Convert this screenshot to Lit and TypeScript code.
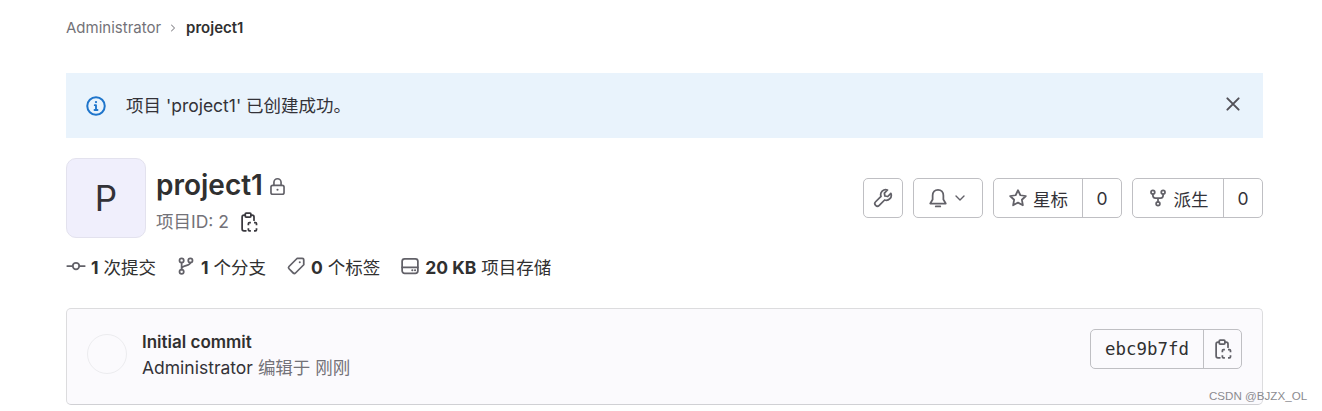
import { LitElement, html, css, svg } from "lit";
import { customElement } from "lit/decorators.js";

const ic = (body: unknown, size = 20, cls = "") => html`<svg class="ic ${cls}" width=${size} height=${size} viewBox="0 0 16 16" fill="none" stroke="currentColor" stroke-width="1.4" stroke-linecap="round" stroke-linejoin="round">${body}</svg>`;

const clipboard = svg`<path d="M5 2.5H4A1.5 1.5 0 0 0 2.5 4v9.5A1.5 1.5 0 0 0 4 15h1.5"/><path d="M9.5 2.5h1A1.5 1.5 0 0 1 12 4v2.5"/><rect x="5" y="0.9" width="4.5" height="3.1" rx=".7"/><path stroke-linecap="butt" d="M7.5 10.5V9.3a.8.8 0 0 1 .8-.8h1.2M12 8.5h1.2a.8.8 0 0 1 .8.8v1.2M14 13v1.2a.8.8 0 0 1-.8.8H12M9.5 15H8.3a.8.8 0 0 1-.8-.8V13"/>`;
const branch = svg`<circle cx="4.5" cy="3.5" r="1.7"/><circle cx="4.5" cy="12.5" r="1.7"/><circle cx="11.5" cy="3.5" r="1.7"/><path d="M4.5 5.2v5.6M11.5 5.2c0 3-7 2-7 5"/>`;
const fork = svg`<circle cx="3.9" cy="3.4" r="1.5"/><circle cx="12.1" cy="3.4" r="1.5"/><circle cx="8" cy="12.6" r="1.5"/><path d="M3.9 4.9v.9c0 1.4 1 2.2 2 2.2h4.2c1 0 2-.8 2-2.2v-.9M8 8v3.1"/>`;

@customElement("app-root")
export class AppRoot extends LitElement {
  static styles = css`
    :host { display: block; position: relative; height: 411px; overflow: hidden; background: #fff; color: #303030;
      font-family: Inter, "Noto Sans CJK SC", sans-serif; font-size: 17.5px; }
    * { box-sizing: border-box; }
    .ic { display: block; flex: none; }
    .page { padding: 0 59px 0 66px; display: flex; flex-direction: column; }
    .crumbs { height: 73px; padding-bottom: 18px; display: flex; align-items: center; font-size: 15px; color: #737278; }
    .crumbs .sep { margin: 0 7px 0 6px; color: #89888d; }
    .crumbs b { color: #303030; font-weight: 600; }
    .alert { height: 65px; background: #e9f3fc; display: flex; align-items: center; padding: 0 20px; color: #333238; }
    .alert .info { color: #1f75cb; margin-right: 20px; }
    .alert .msg { flex: 1; font-size: 17.5px; padding-bottom: 2px; }
    .alert .close { color: #535158; margin-top: -4px; }
    .head { margin-top: 20px; display: flex; align-items: flex-start; justify-content: space-between; }
    .left { display: flex; }
    .avatar { width: 80px; height: 80px; border-radius: 10px; background: #f0effc; border: 1px solid #e3e2ee; display: flex; align-items: center; justify-content: center; font-size: 35px; color: #333238; }
    .titles { margin-left: 10px; }
    .title { display: flex; align-items: center; font-size: 28px; font-weight: 600; line-height: 36px; margin-top: 9px; color: #303030; }
    .title .ic { margin: 3px 0 0 5px; color: #626168; }
    .pid { display: flex; align-items: center; font-size: 17.5px; line-height: 24px; color: #737278; margin-top: 7px; }
    .pid .ic { margin-left: 10px; color: #3a393f; }
    .actions { display: flex; gap: 10px; margin-top: 20px; }
    .btn { height: 40px; border: 1px solid #bfbfc3; border-radius: 5px; display: flex; align-items: stretch; background: #fff; color: #333238; }
    .cell { display: flex; align-items: center; justify-content: center; }
    .cell + .cell { border-left: 1px solid #bfbfc3; }
    .cell .ic { color: #626168; }
    .wrench { width: 38px; }
    .bell { width: 68px; gap: 4px; }
    .star { width: 129px; } .star .a { width: 88px; gap: 5px; } .star .n { flex: 1; }
    .forkb { width: 131px; } .forkb .a { width: 90px; gap: 6px; } .forkb .n { flex: 1; }
    .stats { display: flex; align-items: center; height: 24px; margin-top: 16px; gap: 20px; }
    .stat { display: flex; align-items: center; gap: 5px; font-size: 17.5px; color: #303030; }
    .stat .ic { color: #626168; }
    .stat b { font-weight: 700; }
    .card { margin-top: 30px; height: 97px; border: 1px solid #dcdcde; border-bottom-color: #d0d0d4; border-radius: 5px; background: #fbfafd; display: flex; align-items: flex-start; padding: 20px 20px 0; }
    .circle { width: 40px; height: 40px; border-radius: 50%; border: 1px solid #ececef; background: #fbfafd; margin: 5px 15px 0 0; flex: none; }
    .info2 { flex: 1; line-height: 26px; }
    .ctitle { font-weight: 600; font-size: 17px; color: #303030; }
    .csub { font-size: 17.5px; color: #333238; }
    .csub span { color: #737278; }
    .sha { height: 40px; background: #fbfafd; }
    .sha .a { width: 112px; font-family: "DejaVu Sans Mono", "Liberation Mono", monospace; font-size: 17.4px; color: #303030; }
    .sha .b { width: 38px; }
    .wm { position: absolute; left: 1209px; top: 388px; font-size: 11.6px; line-height: 15px; color: #8b8b90; font-family: "Liberation Sans", sans-serif; }
  `;

  render() {
    return html`<div class="page">
      <nav class="crumbs"><span>Administrator</span>
        <span class="sep">${ic(svg`<path d="M6 4l4 4-4 4"/>`, 12)}</span>
        <b>project1</b></nav>
      <div class="alert">
        <span class="info">${ic(svg`<circle cx="8" cy="8" r="7" stroke-width="1.6"/><path d="M8 7.5v3.5M6.8 11.2h2.4M7 7.3h1" stroke-width="1.5"/><circle cx="8" cy="4.8" r=".9" fill="currentColor" stroke="none"/>`)}</span>
        <span class="msg">项目 'project1' 已创建成功。</span>
        <span class="close">${ic(svg`<path d="M3.5 3.5l9 9M12.5 3.5l-9 9" stroke-width="1.6"/>`)}</span>
      </div>
      <div class="head">
        <div class="left">
          <div class="avatar">P</div>
          <div class="titles">
            <div class="title">project1${ic(svg`<rect x="2.5" y="7" width="11" height="7.5" rx="1.5"/><path d="M5 7V4.5a3 3 0 0 1 6 0V7"/><circle cx="8" cy="10.7" r=".9" fill="currentColor" stroke="none"/>`, 19)}</div>
            <div class="pid">项目ID: 2${ic(clipboard)}</div>
          </div>
        </div>
        <div class="actions">
          <div class="btn"><div class="cell wrench">${ic(svg`<path d="M14.3 4.3l-2.5 2.5-2.3-.4-.4-2.3 2.5-2.5a4 4 0 0 0-5.2 5.1L2.1 11a2.05 2.05 0 0 0 2.9 2.9l4.3-4.3a4 4 0 0 0 5-5.3z"/>`)}</div></div>
          <div class="btn"><div class="cell bell">${ic(svg`<path d="M8 1.4C5.4 1.4 3.7 3.4 3.7 6v3.2L1.8 12.4h12.4l-1.9-3.2V6c0-2.6-1.7-4.6-4.3-4.6z"/><path d="M6.2 14.7h3.6"/>`)}${ic(svg`<path d="M4 6l4 4 4-4"/>`, 16)}</div></div>
          <div class="btn star"><div class="cell a">${ic(svg`<path d="M8 1.8l1.9 4 4.4.6-3.2 3 .8 4.4L8 11.7l-3.9 2.1.8-4.4-3.2-3 4.4-.6z"/>`)}<span>星标</span></div><div class="cell n">0</div></div>
          <div class="btn forkb"><div class="cell a">${ic(fork)}<span>派生</span></div><div class="cell n">0</div></div>
        </div>
      </div>
      <div class="stats">
        <div class="stat">${ic(svg`<circle cx="8" cy="8" r="2.6"/><path d="M1 8h4.4M10.6 8H15"/>`)}<span><b>1</b> 次提交</span></div>
        <div class="stat">${ic(branch)}<span><b>1</b> 个分支</span></div>
        <div class="stat">${ic(svg`<path d="M9 1.8h4a1.2 1.2 0 0 1 1.2 1.2v4L7.6 13.6a1.3 1.3 0 0 1-1.8 0l-3.4-3.4a1.3 1.3 0 0 1 0-1.8z"/><circle cx="11" cy="5" r=".8" fill="currentColor" stroke="none"/>`)}<span><b>0</b> 个标签</span></div>
        <div class="stat">${ic(svg`<rect x="1.7" y="2.2" width="12.6" height="11.6" rx="2"/><path d="M1.7 9h12.6"/><path d="M9.8 11.4h.1M12 11.4h.1" stroke-width="1.6"/>`)}<span><b>20 KB</b> 项目存储</span></div>
      </div>
      <div class="card">
        <div class="circle"></div>
        <div class="info2">
          <div class="ctitle">Initial commit</div>
          <div class="csub">Administrator <span>编辑于 刚刚</span></div>
        </div>
        <div class="btn sha"><div class="cell a">ebc9b7fd</div><div class="cell b">${ic(clipboard)}</div></div>
      </div>
    </div>
    <div class="wm">CSDN @BJZX_OL</div>`;
  }
}
